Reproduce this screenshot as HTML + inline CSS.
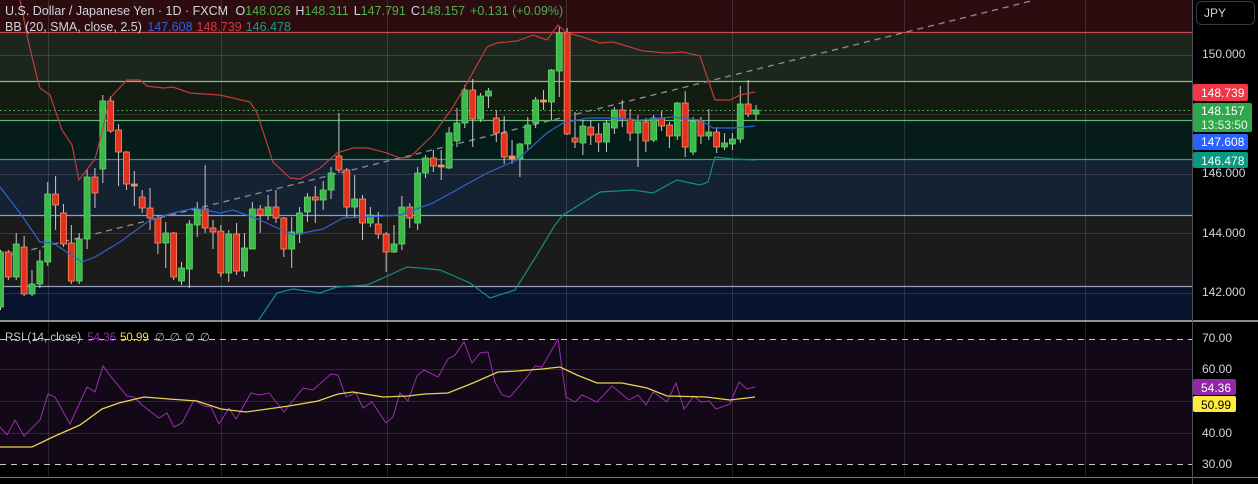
<!DOCTYPE html>
<html><head><meta charset="utf-8"><style>
html,body{margin:0;padding:0;background:#000;width:1258px;height:484px;overflow:hidden;font-family:"Liberation Sans",sans-serif}
svg{display:block}
</style></head><body>
<svg id="c" width="1258" height="484" xmlns="http://www.w3.org/2000/svg" font-family="Liberation Sans, sans-serif">
<rect x="0" y="0" width="1258" height="484" fill="#000"/>
<rect x="0" y="0" width="1192" height="32" fill="#2d0c10"/>
<rect x="0" y="32" width="1192" height="49" fill="#1c261c"/>
<rect x="0" y="81" width="1192" height="39" fill="#131c10"/>
<rect x="0" y="120" width="1192" height="39" fill="#051c18"/>
<rect x="0" y="159" width="1192" height="56" fill="#152231"/>
<rect x="0" y="215" width="1192" height="71" fill="#1b1b1b"/>
<rect x="0" y="286" width="1192" height="35" fill="#08142e"/>
<rect x="0" y="339" width="1192" height="125" fill="#120818"/>
<g stroke="#ffffff" stroke-opacity="0.13" stroke-width="1">
<line x1="48.5" y1="0" x2="48.5" y2="477"/><line x1="221.5" y1="0" x2="221.5" y2="477"/><line x1="387.5" y1="0" x2="387.5" y2="477"/><line x1="566.5" y1="0" x2="566.5" y2="477"/><line x1="732.5" y1="0" x2="732.5" y2="477"/><line x1="904.5" y1="0" x2="904.5" y2="477"/><line x1="1085.5" y1="0" x2="1085.5" y2="477"/>
<line x1="0" y1="55.5" x2="1192" y2="55.5"/><line x1="0" y1="114.5" x2="1192" y2="114.5"/><line x1="0" y1="174.5" x2="1192" y2="174.5"/><line x1="0" y1="233.5" x2="1192" y2="233.5"/><line x1="0" y1="293.5" x2="1192" y2="293.5"/>
<line x1="0" y1="369.5" x2="1192" y2="369.5"/><line x1="0" y1="401.5" x2="1192" y2="401.5"/><line x1="0" y1="433.5" x2="1192" y2="433.5"/>
</g>
<g stroke-width="1.2">
<line x1="0" y1="32.5" x2="1192" y2="32.5" stroke="#c94a52"/>
<line x1="0" y1="81.5" x2="1192" y2="81.5" stroke="#7fc27f"/>
<line x1="0" y1="120.5" x2="1192" y2="120.5" stroke="#5cb870"/>
<line x1="0" y1="159.5" x2="1192" y2="159.5" stroke="#1f9f8c"/>
<line x1="0" y1="215.5" x2="1192" y2="215.5" stroke="#6aaae8"/>
<line x1="0" y1="286.5" x2="1192" y2="286.5" stroke="#9aa3b8"/>
</g>
<line x1="0" y1="110.5" x2="1192" y2="110.5" stroke="#66c266" stroke-dasharray="1.5,3"/>
<line x1="10" y1="255" x2="1035" y2="0" stroke="#8a8f98" stroke-width="1.3" stroke-dasharray="6,5"/>
<g id="cand"></g>
<g fill="none" stroke-width="1.2">
<polyline stroke="#c23b3e" points="20,0 28,40 37.7,80 40,88 50,95 62,130 72,145 79,180 95,159 100,140 110,98 127,80 140,80 147,86 163,88 173,87 190,93 220,95 250,102 257,113 273,162 290,178 300,179 320,168 337,153 353,148 368,148 387,153 400,158 410,157 433,135 453,107 467,83 487,47 497,43 517,41 533,35 547,40 558,25 567,33 583,37 600,43 613,42 643,51 667,53 683,52 700,56 715,100 730,100 740,95 755,92"/>
<polyline stroke="#2e62d6" points="0,187 20,213 40,242 53,243 82,262 95,257 120,242 150,220 173,213 195,208 220,213 233,210 260,220 293,235 323,229 343,218 367,217 400,215 433,203 487,173 517,160 547,133 563,123 587,118 613,118 640,120 673,117 700,120 713,128 733,128 755,126"/>
<polyline stroke="#138f80" points="258,321 277,293 293,289 320,293 337,287 367,285 383,278 407,267 420,268 440,270 470,283 490,298 515,290 540,250 555,225 563,215 600,192 633,190 653,193 677,180 700,185 708,182 715,157 733,159 755,160"/>
</g>
<line x1="0" y1="321" x2="1258" y2="321" stroke="#b8bcc4" stroke-width="1.5"/>
<line x1="0" y1="339.5" x2="1192" y2="339.5" stroke="#c8c8d0" stroke-dasharray="6,5"/>
<line x1="0" y1="464.5" x2="1192" y2="464.5" stroke="#c8c8d0" stroke-dasharray="6,5"/>
<line x1="0" y1="477.5" x2="1258" y2="477.5" stroke="#70747c"/>
<polyline fill="none" stroke="#9b2fae" stroke-width="1" points="0,427 7,435 15,420 24,436 40,420 48,394 55,397 70,424 87,387 95,392 103,366 112,378 127,396 134,397 142,405 159,418 167,413 174,427 182,423 194,400 204,406 211,407 219,424 229,408 236,419 251,393 259,395 269,393 284,412 303,388 313,390 331,374 338,375 346,397 356,393 363,408 372,402 386,423 393,417 400,393 408,401 417,376 424,370 438,377 448,359 455,355 464,342 472,363 480,353 488,352 495,382 502,395 510,397 527,377 535,366 542,367 558,339 566,397 575,402 582,395 597,402 612,386 629,400 638,395 646,405 653,392 667,402 676,383 684,409 694,396 701,402 709,401 716,409 730,404 739,382 747,389 755,387"/>
<polyline fill="none" stroke="#e8d44d" stroke-width="1.3" points="0,447 32,447 55,436 80,425 102,409 119,403 144,397 169,399 197,401 221,409 246,412 289,406 318,401 338,394 353,392 383,397 408,396 425,394 448,393 473,383 498,372 517,371 542,369 560,367 577,375 597,383 622,383 647,388 667,396 706,397 730,400 755,397"/>
<line x1="1192.5" y1="0" x2="1192.5" y2="484" stroke="#50535c"/>
<rect x="1196.5" y="1.5" width="58" height="23" rx="5" fill="none" stroke="#363a45"/>
<text x="1204" y="17" fill="#d1d4dc" font-size="12">JPY</text>
<g fill="#d1d4dc" font-size="12">
<text x="1202" y="58">150.000</text>
<text x="1202" y="177">146.000</text>
<text x="1202" y="237">144.000</text>
<text x="1202" y="296">142.000</text>
<text x="1202" y="342">70.00</text>
<text x="1202" y="373">60.00</text>
<text x="1202" y="437">40.00</text>
<text x="1202" y="468">30.00</text>
</g>
<rect x="1193" y="84" width="55" height="17" rx="2" fill="#f23645"/>
<text x="1201" y="97" fill="#fff" font-size="12">148.739</text>
<rect x="1193" y="103" width="59" height="29" rx="2" fill="#2ea84a"/>
<text x="1201" y="115" fill="#fff" font-size="12">148.157</text>
<text x="1201" y="129" fill="#e8f5e8" font-size="12">13:53:50</text>
<rect x="1193" y="134" width="55" height="16" rx="2" fill="#2962ff"/>
<text x="1201" y="146" fill="#fff" font-size="12">147.608</text>
<rect x="1193" y="152" width="55" height="16" rx="2" fill="#089981"/>
<text x="1201" y="165" fill="#fff" font-size="12">146.478</text>
<rect x="1193" y="379" width="43" height="16" rx="2" fill="#9028a8"/>
<text x="1201" y="392" fill="#fff" font-size="12">54.36</text>
<rect x="1193" y="396" width="43" height="16" rx="2" fill="#ffeb3b"/>
<text x="1201" y="409" fill="#000" font-size="12">50.99</text>
<g font-size="12.5">
<text x="5" y="15" fill="#d1d4dc">U.S. Dollar / Japanese Yen · 1D · FXCM <tspan dx="4">O</tspan><tspan fill="#4caf50">148.026</tspan><tspan dx="5">H</tspan><tspan fill="#4caf50">148.311</tspan><tspan dx="5">L</tspan><tspan fill="#4caf50">147.791</tspan><tspan dx="5">C</tspan><tspan fill="#4caf50">148.157</tspan><tspan dx="5" fill="#4caf50">+0.131 (+0.09%)</tspan></text>
<text x="5" y="31" fill="#d1d4dc">BB (20, SMA, close, 2.5) <tspan dx="2" fill="#3060e0">147.608</tspan><tspan dx="4" fill="#d23a45">148.739</tspan><tspan dx="4" fill="#1a9a86">146.478</tspan></text>
</g>
<text x="5" y="341" font-size="11.5" fill="#c8c8d0">RSI (14, close) <tspan dx="3" fill="#8e2fa6">54.36</tspan><tspan dx="4" fill="#f0dc4a">50.99</tspan><tspan dx="6" fill="#b0b0b8" letter-spacing="5">∅∅∅∅</tspan></text>
</svg>
<script>
var C=[
[0,'g',252,307,250,310],[1,'r',252,277,250,280],[2,'g',244,277,233,280],[3,'r',247,294,236,296],[4,'g',284,294,270,296],[5,'g',261,284,250,288],[6,'g',194,262,182,266],[7,'r',194,205,176,230],[8,'r',213,244,204,247],[9,'r',243,281,225,284],[10,'g',239,281,233,284],[11,'g',177,239,169,249],[12,'r',177,193,168,208],[13,'g',101,169,95,183],[14,'r',101,131,96,133],[15,'r',130,152,124,186],[16,'r',152,184,151,190],[17,'o',184,185,171,206],[18,'r',197,208,190,213],[19,'r',208,218,188,230],[20,'r',218,243,215,254],[21,'g',233,243,222,268],[22,'r',233,277,232,280],[23,'g',268,281,262,285],[24,'g',224,269,220,288],[25,'g',209,225,202,237],[26,'r',209,228,165,233],[27,'r',228,232,220,249],[28,'r',231,273,225,277],[29,'g',234,273,230,282],[30,'r',234,271,223,275],[31,'g',248,271,233,277],[32,'g',209,249,202,249],[33,'r',209,215,205,233],[34,'g',207,215,195,220],[35,'r',207,218,190,223],[36,'r',218,249,217,257],[37,'g',232,249,217,268],[38,'g',213,234,207,243],[39,'g',197,212,193,222],[40,'r',197,200,186,223],[41,'g',190,200,181,210],[42,'g',173,190,167,199],[43,'r',156,170,113,173],[44,'r',170,207,168,217],[45,'g',199,207,175,217],[46,'r',199,223,195,240],[47,'g',215,223,207,227],[48,'r',224,234,212,239],[49,'r',234,252,232,272],[50,'g',244,252,225,253],[51,'g',207,244,196,250],[52,'r',207,218,203,228],[53,'g',173,223,167,230],
[54,'g',158,173,155,178],[55,'r',158,166,150,172],[56,'o',165,167,150,180],[57,'g',133,168,127,169],[58,'g',123,141,108,147],[59,'g',90,123,85,128],[60,'r',90,119,79,147],[61,'g',96,119,93,122],[62,'g',91,96,88,108],[63,'r',118,133,110,142],[64,'r',133,157,116,164],[65,'o',156,159,140,164],[66,'g',144,159,143,177],[67,'g',125,144,117,150],[68,'g',100,123,97,128],[69,'o',100,102,90,110],[70,'g',70,102,69,120],[71,'g',33,71,27,97],[72,'r',33,134,28,135],[73,'r',138,142,112,148],[74,'g',126,143,120,155],[75,'r',127,135,120,145],[76,'r',134,142,123,152],[77,'g',123,142,120,152],[78,'g',110,128,107,134],[79,'r',110,119,100,127],[80,'r',119,133,109,141],[81,'g',122,133,115,167],[82,'r',122,141,118,152],[83,'g',118,140,115,142],[84,'r',118,126,111,131],[85,'r',125,136,122,148],[86,'g',103,136,102,140],[87,'r',103,147,91,157],[88,'g',121,152,117,155],[89,'r',121,136,117,144],[90,'g',132,136,109,140],[91,'r',132,147,127,153],[92,'g',143,147,133,150],[93,'g',139,144,133,150],[94,'g',104,139,86,143],[95,'r',104,114,80,117],[96,'g',110,114,105,120]];
var s='';
C.forEach(function(c){var x=c[0]*7.87+0.5;var t=c[1];var fill=t=='g'?'#3db84a':(t=='o'?'#f0906a':'#e2321e');var st=t=='g'?'#5fd66a':'#f5906a';
s+='<line x1="'+x+'" y1="'+c[4]+'" x2="'+x+'" y2="'+c[5]+'" stroke="#c8c8c8" stroke-width="1"/>';
var h=Math.max(2,c[3]-c[2]);s+='<rect x="'+(x-3)+'" y="'+c[2]+'" width="6" height="'+h+'" fill="'+fill+'" stroke="'+st+'" stroke-width="0.8"/>';});
document.getElementById('cand').innerHTML=s;
</script>
</body></html>
